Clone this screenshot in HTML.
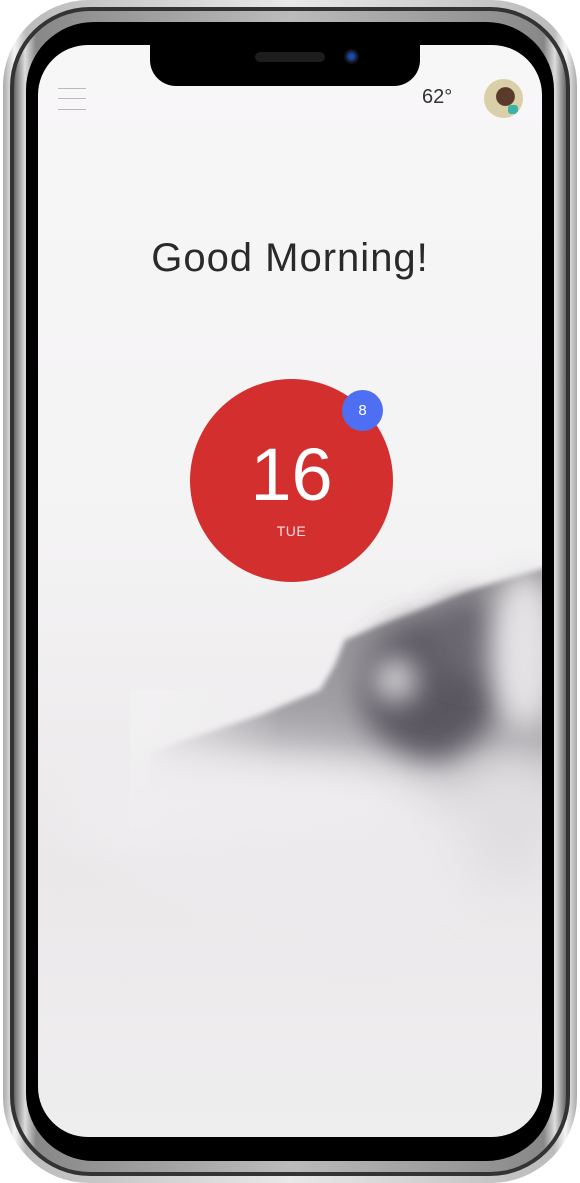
<!DOCTYPE html>
<html><head><meta charset="utf-8"><style>
html,body{margin:0;padding:0;background:#fff;}
body{width:580px;height:1183px;position:relative;overflow:hidden;font-family:"Liberation Sans",sans-serif;}
.frame{position:absolute;left:3px;top:0;width:574px;height:1183px;border-radius:86px;background:linear-gradient(90deg,#aaa,#f4f4f4 2%,#bbb 4%,#e8e8e8 50%,#bbb 96%,#f4f4f4 98%,#aaa);}
.f2{position:absolute;left:10px;top:7px;width:560px;height:1169px;border-radius:80px;background:#333;}
.f3{position:absolute;left:14px;top:11px;width:552px;height:1161px;border-radius:76px;background:linear-gradient(90deg,#666,#ddd 2%,#888 4%,#bbb 50%,#888 96%,#ddd 98%,#666);}
.f4{position:absolute;left:26px;top:22px;width:528px;height:1139px;border-radius:68px;background:#000;}
.screen{position:absolute;left:38px;top:45px;width:504px;height:1092px;border-radius:50px;overflow:hidden;background:linear-gradient(#f8f7f8,#f4f3f4 45%,#ebe8ea 75%,#efeeef);}
.notch{position:absolute;left:150px;top:40px;width:270px;height:46px;background:#000;border-radius:0 0 26px 26px;}
.spk{position:absolute;left:255px;top:52px;width:70px;height:10px;border-radius:5px;background:#1d1d1d;}
.cam{position:absolute;left:344px;top:49px;width:15px;height:15px;border-radius:50%;background:radial-gradient(#1a4bb0 20%,#111 60%);}
.ham{position:absolute;left:58px;width:28px;height:1px;background:#bbb;}
</style></head><body>
<div class="frame"></div><div class="f2"></div><div class="f3"></div><div class="f4"></div>
<div class="screen">
<svg width="504" height="1092" style="position:absolute;left:0;top:0">
<defs>
<filter id="b1" x="-50%" y="-50%" width="200%" height="200%"><feGaussianBlur stdDeviation="3"/></filter>
<filter id="b2" x="-100%" y="-100%" width="300%" height="300%"><feGaussianBlur stdDeviation="14"/></filter>
<filter id="b3" x="-100%" y="-100%" width="300%" height="300%"><feGaussianBlur stdDeviation="25"/></filter>
<linearGradient id="mg" x1="0" y1="0" x2="0" y2="1"><stop offset="0" stop-color="#8a878c"/><stop offset="0.6" stop-color="#a9a6ab"/><stop offset="1" stop-color="#ebe9eb" stop-opacity="0"/></linearGradient>
<linearGradient id="lf" x1="0" y1="0" x2="1" y2="0"><stop offset="0" stop-color="#f2f1f2"/><stop offset="1" stop-color="#f2f1f2" stop-opacity="0"/></linearGradient>
</defs>
<g transform="translate(-38,-45)">
<path d="M150,752 L200,735 L260,715 L320,690 L335,665 L345,640 L380,625 L420,610 L470,590 L510,578 L545,568 L545,860 L150,800Z" fill="url(#mg)" filter="url(#b1)"/>
<rect x="130" y="690" width="150" height="140" fill="url(#lf)"/>
<ellipse cx="430" cy="690" rx="70" ry="70" fill="#5a5760" filter="url(#b2)"/>
<ellipse cx="470" cy="640" rx="40" ry="40" fill="#6a6670" filter="url(#b2)"/>
<ellipse cx="395" cy="680" rx="22" ry="22" fill="#d8d6d8" filter="url(#b2)"/>
<ellipse cx="525" cy="650" rx="35" ry="80" fill="#e4e2e4" filter="url(#b2)"/>
<ellipse cx="250" cy="810" rx="180" ry="60" fill="#efedef" filter="url(#b3)"/>
<ellipse cx="360" cy="870" rx="220" ry="50" fill="#eceaec" filter="url(#b3)"/>
<ellipse cx="510" cy="820" rx="50" ry="70" fill="#e0dee0" filter="url(#b3)"/>
</g>
</svg>
</div>
<div class="notch"></div><div class="spk"></div><div class="cam"></div>
<div class="ham" style="top:88px"></div><div class="ham" style="top:98px"></div><div class="ham" style="top:109px"></div>
<div style="position:absolute;left:422px;top:86px;font-size:20px;color:#333;">62°</div>
<div style="position:absolute;left:484px;top:79px;width:39px;height:39px;border-radius:50%;background:radial-gradient(circle at 55% 45%,#5a3a2a 0 30%,#d9cfa8 32%);overflow:hidden"><div style="position:absolute;left:24px;top:26px;width:10px;height:9px;background:#3bb3a8;border-radius:3px"></div></div>
<div style="position:absolute;left:0;width:580px;top:236px;text-align:center;font-size:40px;color:#2a2a2a;letter-spacing:1px;">Good Morning!</div>
<div style="position:absolute;left:190px;top:379px;width:203px;height:203px;border-radius:50%;background:#d32f2f;"></div>
<div style="position:absolute;left:190px;top:430px;width:203px;text-align:center;font-size:74px;color:#fff;line-height:90px;">16</div>
<div style="position:absolute;left:190px;top:523px;width:203px;text-align:center;font-size:14px;color:#fdd;letter-spacing:0.5px;">TUE</div>
<div style="position:absolute;left:342px;top:390px;width:41px;height:41px;border-radius:50%;background:#4e6ff2;color:#fff;font-size:15px;text-align:center;line-height:41px;">8</div>
</body></html>
